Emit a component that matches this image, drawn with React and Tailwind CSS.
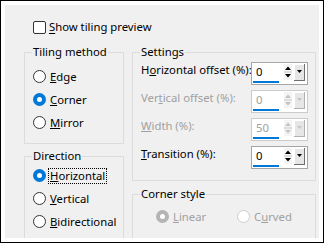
import React from "react";

function Radio({ checked, disabled }) {
  if (checked) {
    const c = disabled ? "#b4b4b4" : "#0078d7";
    return (
      <svg width="13" height="13" viewBox="0 0 13 13" className="shrink-0">
        <circle cx="6.5" cy="6.5" r="6.5" fill={c} />
        <circle cx="6.5" cy="6.5" r="2.5" fill="#ffffff" />
      </svg>
    );
  }
  return (
    <svg width="13" height="13" viewBox="0 0 13 13" className="shrink-0">
      <circle cx="6.5" cy="6.5" r="6" fill="#ffffff" stroke={disabled ? "#cccccc" : "#333333"} strokeWidth="1" />
    </svg>
  );
}

function RadioRow({ checked, disabled, focus, children }) {
  return (
    <div className="h-[23px] flex items-center whitespace-nowrap">
      <Radio checked={checked} disabled={disabled} />
      <span
        className={`ml-[2px] px-[1px] leading-[14px] border border-dotted ${focus ? "border-black" : "border-transparent"} ${disabled ? "text-[#a0a0a0]" : "text-black"}`}
      >
        {children}
      </span>
    </div>
  );
}

function Spin({ value, disabled }) {
  const arrow = disabled ? "#c4c4c4" : "#000000";
  return (
    <div className={`w-[57px] h-[23px] border ${disabled ? "border-[#cccccc]" : "border-[#a6a6a6]"} bg-white flex items-start`}>
      <div className="w-[32px] flex flex-col pl-[1px]">
        <span className={`h-[18px] leading-[17px] pl-[3px] ${disabled ? "text-[#a0a0a0]" : "text-black"}`}>{value}</span>
        <div className="w-[26px] h-[2px] bg-[#0078d7]" />
      </div>
      <svg width="8" height="16" viewBox="0 0 8 16" className="mt-[1px] shrink-0">
        <rect x="0" y="0" width="8" height="16" fill="#f4f4f4" />
        <polygon points="1,6 4,2.5 7,6" fill={arrow} />
        <rect x="0" y="7.5" width="8" height="1" fill="#c8c8c8" />
        <polygon points="1,10 7,10 4,13.5" fill={arrow} />
      </svg>
      <svg width="11" height="17" viewBox="0 0 11 17" className="ml-[2px] mt-[1px] shrink-0">
        <rect x="0" y="0" width="11" height="17" fill="#e6e6e6" />
        <rect x="0" y="0" width="11" height="1" fill="#ffffff" />
        <rect x="0" y="0" width="1" height="17" fill="#ffffff" />
        <rect x="10" y="0" width="1" height="17" fill={disabled ? "#b0b0b0" : "#6e6e6e"} />
        <rect x="0" y="16" width="11" height="1" fill={disabled ? "#b0b0b0" : "#6e6e6e"} />
        <polygon points="3,6 8,6 5.5,9" fill={arrow} />
      </svg>
    </div>
  );
}

function SpinRow({ label, value, disabled }) {
  return (
    <div className="h-[28px] flex items-start">
      <span className={`w-[110px] leading-[16px] whitespace-nowrap ${disabled ? "text-[#a0a0a0]" : "text-black"}`}>{label}</span>
      <Spin value={value} disabled={disabled} />
    </div>
  );
}

function Group({ title, className, children }) {
  return (
    <fieldset className={`border border-[#dcdcdc] pl-[8px] ${className}`}>
      <legend className="px-[1px] -ml-[1px] leading-[16px] text-black whitespace-nowrap">{title}</legend>
      {children}
    </fieldset>
  );
}

export default function App() {
  return (
    <div className="w-[324px] h-[243px] border border-black bg-white p-[4px] font-['Noto_Sans',sans-serif] text-[11.3px] text-black">
      <div className="w-full h-full bg-[#f0f0f0] overflow-hidden">
        <div className="h-[16px] mt-[14px] ml-[28px] flex items-center">
          <span className="w-[13px] h-[13px] border border-[#333333] rounded-[2px] bg-white shrink-0" />
          <span className="ml-[3px] leading-[16px] whitespace-nowrap">
            <u className="underline-offset-[2px]">S</u>how tiling preview
          </span>
        </div>

        <div className="flex mt-[9px] ml-[19px] gap-[8px]">
          <div className="w-[100px] flex flex-col gap-[4px]">
            <Group title="Tiling method" className="h-[100px]">
              <div className="pt-[5px]">
                <RadioRow><u>E</u>dge</RadioRow>
                <RadioRow checked><u>C</u>orner</RadioRow>
                <RadioRow><u>M</u>irror</RadioRow>
              </div>
            </Group>
            <Group title="Direction" className="h-[100px]">
              <div>
                <RadioRow checked focus><u>H</u>orizontal</RadioRow>
                <RadioRow><u>V</u>ertical</RadioRow>
                <RadioRow><u>B</u>idirectional</RadioRow>
              </div>
            </Group>
          </div>

          <div className="w-[184px] flex flex-col gap-[5px]">
            <Group title="Settings" className="h-[137px]">
              <div className="pt-[2px]">
                <SpinRow label={<>H<u>o</u>rizontal offset (%):</>} value="0" />
                <SpinRow label={<>Ver<u>t</u>ical offset (%):</>} value="0" disabled />
                <SpinRow label={<><u>W</u>idth (%):</>} value="50" disabled />
                <SpinRow label={<><u>T</u>ransition (%):</>} value="0" />
              </div>
            </Group>
            <Group title="Corner style" className="h-[100px]">
              <div className="flex pt-[3px] pl-[15px]">
                <div className="w-[81px]">
                  <RadioRow checked disabled><u>L</u>inear</RadioRow>
                </div>
                <RadioRow disabled>C<u>u</u>rved</RadioRow>
              </div>
            </Group>
          </div>
        </div>
      </div>
    </div>
  );
}
